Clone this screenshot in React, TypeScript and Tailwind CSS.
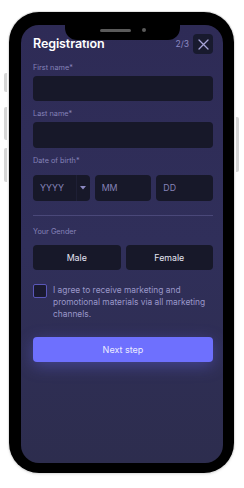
import React from "react";

export default function App() {
  const font = { fontFamily: "Inter, 'Noto Sans', sans-serif" };
  return (
    <div className="w-[244px] h-[488px] bg-white pl-[9px] pt-[12px]" style={font}>
      <div className="relative w-[225px] h-[461px] rounded-[30px] bg-black pt-[13px] pl-[12px] pr-[11px] pb-[10px] shadow-[0_0_0_1px_#e2e2e2,0_1px_3px_rgba(0,0,0,0.15)]">
        {/* side buttons */}
        <div className="absolute left-[-5px] top-[61px] w-[3px] h-[19px] rounded-l-[2px] bg-[#d6d6d6]" />
        <div className="absolute left-[-5px] top-[95px] w-[3px] h-[33px] rounded-l-[2px] bg-[#d6d6d6]" />
        <div className="absolute left-[-5px] top-[136px] w-[3px] h-[34px] rounded-l-[2px] bg-[#d6d6d6]" />
        <div className="absolute right-[-5px] top-[105px] w-[3px] h-[55px] rounded-r-[2px] bg-[#d6d6d6]" />

        <div className="relative h-full rounded-[18px] overflow-hidden bg-gradient-to-b from-[#2e2b56] via-[#302f5a] to-[#2d2d4e] pl-[12px] pr-[10px] pt-[9px]">
          <div className="flex items-center justify-between h-[20px]">
            <div className="text-[12.5px] font-semibold text-white tracking-[-0.1px] leading-none">Registration</div>
            <div className="flex items-center gap-[4px]">
              <span className="text-[8.5px] text-[#8c89c2]">2/3</span>
              <button className="w-[20px] h-[20px] rounded-[4px] bg-[#181a2e] flex items-center justify-center">
                <svg width="11" height="11" viewBox="0 0 11 11" fill="none" stroke="#a6a3d6" strokeWidth="1.3" strokeLinecap="round">
                  <path d="M1 1 L10 10 M10 1 L1 10" />
                </svg>
              </button>
            </div>
          </div>

          <div className="mt-[9px] h-[10px] leading-[10px] text-[7.3px] text-[#8582b8]">First name*</div>
          <div className="mt-[3px] h-[25px] rounded-[4px] bg-[#171829]" />

          <div className="mt-[8px] h-[10px] leading-[10px] text-[7.3px] text-[#8582b8]">Last name*</div>
          <div className="mt-[3px] h-[26px] rounded-[4px] bg-[#171829]" />

          <div className="mt-[8px] h-[10px] leading-[10px] text-[7.3px] text-[#8582b8]">Date of birth*</div>
          <div className="mt-[9px] grid grid-cols-3 gap-[5px]">
            <div className="h-[26px] rounded-[4px] bg-[#171829] flex items-center pl-[7px]">
              <span className="flex-1 text-[8.8px] text-[#8582b8]">YYYY</span>
              <div className="w-px h-full bg-[#1e1f35]" />
              <div className="w-[13px] flex items-center justify-center">
                <svg width="6" height="4" viewBox="0 0 6 4">
                  <path d="M0 0 L6 0 L3 3.5 Z" fill="#8c89c2" />
                </svg>
              </div>
            </div>
            <div className="h-[26px] rounded-[4px] bg-[#171829] flex items-center pl-[7px] text-[8.8px] text-[#8582b8]">MM</div>
            <div className="h-[26px] rounded-[4px] bg-[#171829] flex items-center pl-[7px] text-[8.8px] text-[#8582b8]">DD</div>
          </div>

          <div className="mt-[14px] h-px bg-[#4a4879]" />

          <div className="mt-[11px] h-[10px] leading-[10px] text-[7.3px] text-[#8582b8]">Your Gender</div>
          <div className="mt-[8px] grid grid-cols-2 gap-[5px]">
            <button className="h-[25px] rounded-[4px] bg-[#171829] text-[8.8px] text-[#e4e4f2]">Male</button>
            <button className="h-[25px] rounded-[4px] bg-[#171829] text-[8.8px] text-[#e4e4f2]">Female</button>
          </div>

          <div className="mt-[14px] flex items-start gap-[6px]">
            <div className="w-[14px] h-[14px] shrink-0 rounded-[2px] border border-[#5a57b8] bg-[#1a1a30]" />
            <p className="text-[8.4px] leading-[12px] text-[#9a97c9]">
              I agree to receive marketing and promotional materials via all marketing channels.
            </p>
          </div>

          <button className="mt-[17px] w-full h-[25px] rounded-[4px] bg-[#6e70fe] text-[9px] text-[#ececff] shadow-[0_4px_16px_rgba(110,112,254,0.35)]">
            Next step
          </button>
        </div>

        {/* notch */}
        <div className="absolute left-[56px] top-0 w-[115px] h-[28px] bg-black rounded-b-[12px] flex items-center justify-center gap-[11px] pt-[8px]">
          <div className="w-[31px] h-[3px] rounded-full bg-[#5a5a5a]" />
          <div className="w-[4px] h-[4px] rounded-full bg-[#5a5a5a]" />
        </div>
      </div>
    </div>
  );
}
